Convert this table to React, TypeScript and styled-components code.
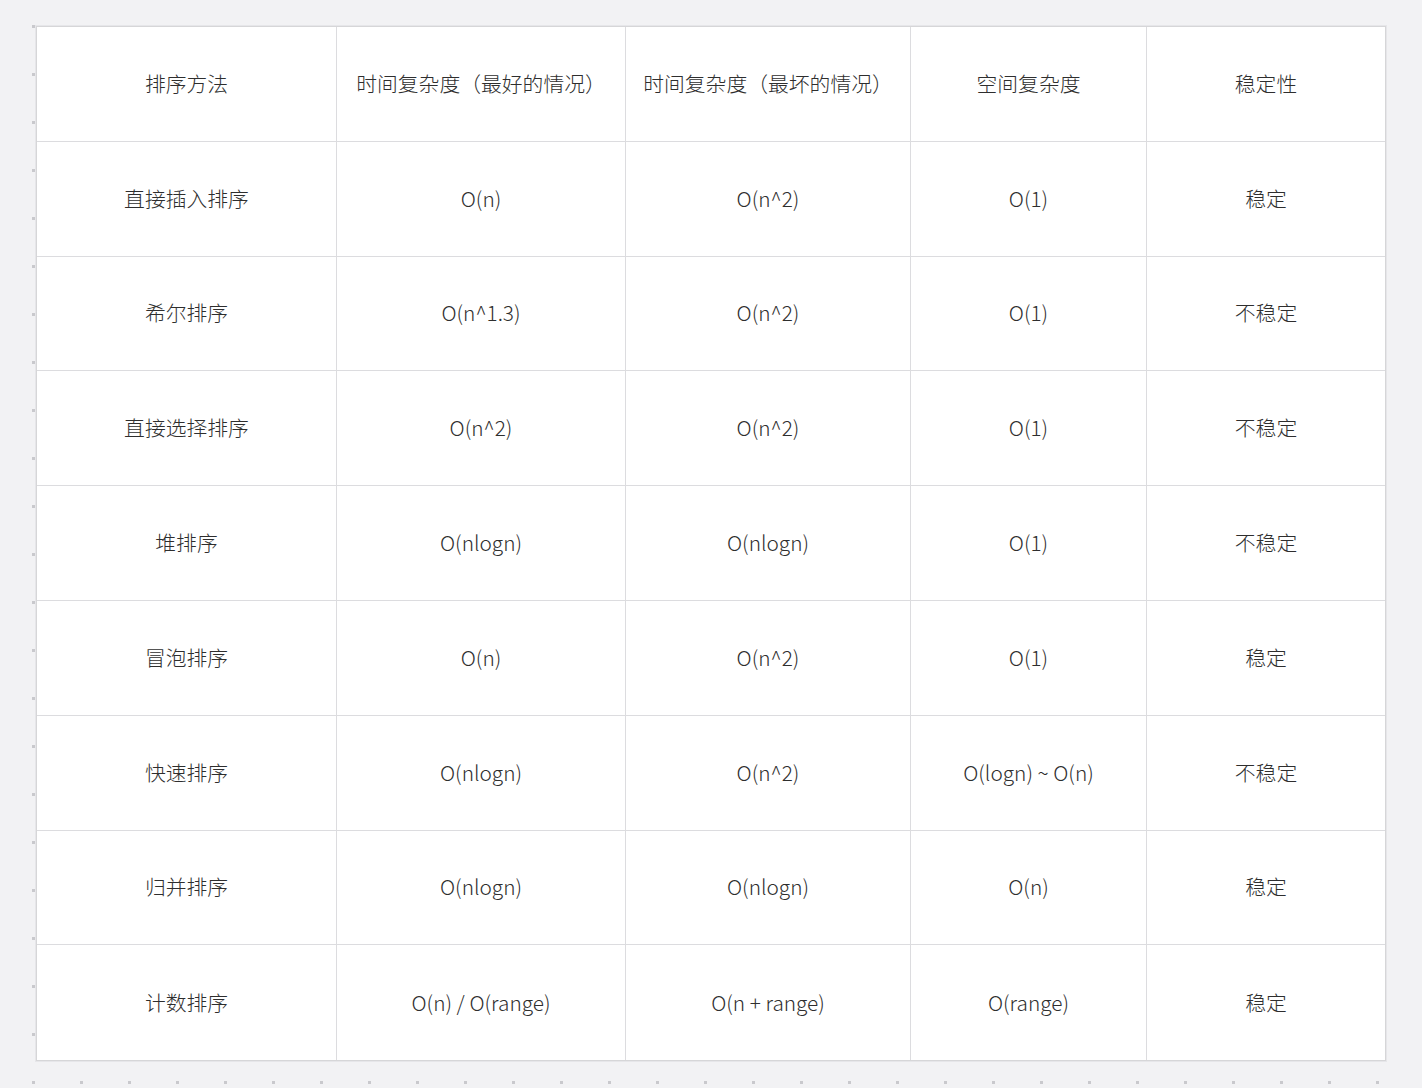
import React from 'react'
import styled, { createGlobalStyle } from 'styled-components'

const GlobalStyle = createGlobalStyle`
  html, body {
    margin: 0;
    padding: 0;
  }
  body {
    background-color: #f2f2f4;
    background-image: conic-gradient(at 3px 3px, transparent 75%, #c9c9cd 0);
    background-size: 48px 48px;
    background-position: 32px 25px;
    min-height: 1088px;
    font-family: "Noto Sans CJK SC", "Noto Sans", sans-serif;
  }
`

const Page = styled.div`
  padding: 26px 0 0 36px;
  height: 1088px;
  box-sizing: border-box;
`

const Table = styled.div`
  display: grid;
  grid-template-columns: 300px 289px 285px 236px 238px;
  grid-auto-rows: 114.8px;
  width: 1348px;
  background: #ffffff;
  border: 1px solid #d6d6d8;
  box-shadow: 0 0 0 1px #e6e6e9;
`

const Cell = styled.div<{ $lastCol: boolean; $lastRow: boolean }>`
  display: flex;
  align-items: center;
  justify-content: center;
  box-sizing: border-box;
  padding-bottom: 2px;
  border-right: ${({ $lastCol }) => ($lastCol ? 'none' : '1px solid #dcdcdf')};
  border-bottom: ${({ $lastRow }) => ($lastRow ? 'none' : '1px solid #dcdcdf')};
  font-size: 20.8px;
  font-weight: 300;
  color: #2e2e2e;
  white-space: nowrap;
`

const rows: string[][] = [
  ['排序方法', '时间复杂度（最好的情况）', '时间复杂度（最坏的情况）', '空间复杂度', '稳定性'],
  ['直接插入排序', 'O(n)', 'O(n^2)', 'O(1)', '稳定'],
  ['希尔排序', 'O(n^1.3)', 'O(n^2)', 'O(1)', '不稳定'],
  ['直接选择排序', 'O(n^2)', 'O(n^2)', 'O(1)', '不稳定'],
  ['堆排序', 'O(nlogn)', 'O(nlogn)', 'O(1)', '不稳定'],
  ['冒泡排序', 'O(n)', 'O(n^2)', 'O(1)', '稳定'],
  ['快速排序', 'O(nlogn)', 'O(n^2)', 'O(logn) ~ O(n)', '不稳定'],
  ['归并排序', 'O(nlogn)', 'O(nlogn)', 'O(n)', '稳定'],
  ['计数排序', 'O(n) / O(range)', 'O(n + range)', 'O(range)', '稳定'],
]

const App = () => {
  return (
    <Page>
      <GlobalStyle />
      <Table>
        {rows.map((row, r) =>
          row.map((text, c) => (
            <Cell
              key={`${r}-${c}`}
              $lastCol={c === row.length - 1}
              $lastRow={r === rows.length - 1}
            >
              {text}
            </Cell>
          ))
        )}
      </Table>
    </Page>
  )
}

export default App
